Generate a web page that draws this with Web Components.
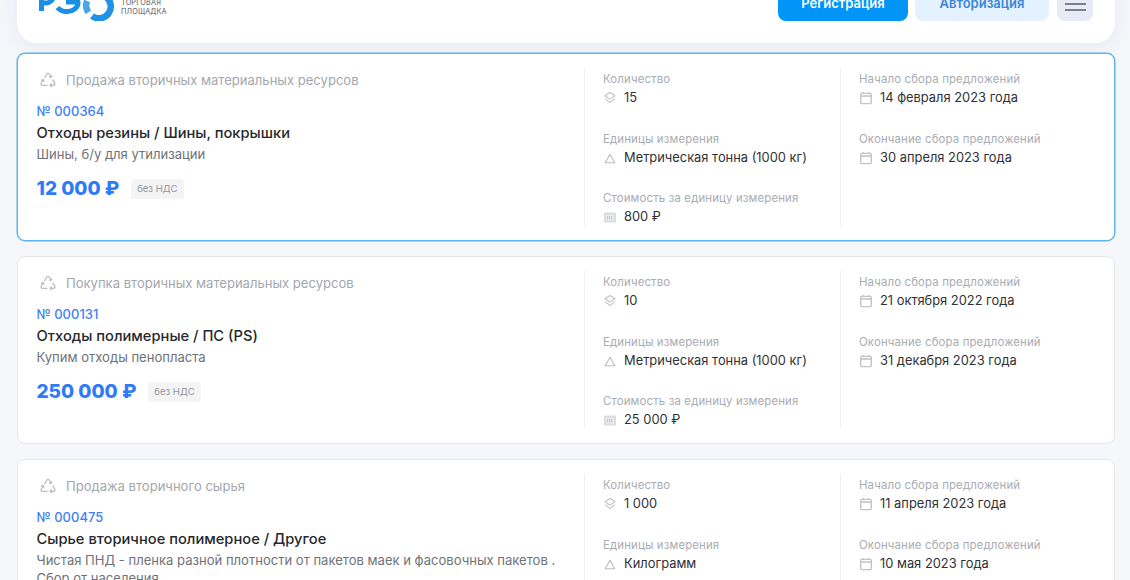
<!DOCTYPE html>
<html lang="ru">
<head>
<meta charset="utf-8">
<title>Торговая площадка</title>
<style>
  html, body { margin: 0; height: 100%; overflow: hidden; }
  body { background: #f5f7fb; font-family: Inter, "Noto Sans", sans-serif; color: #2b2d33; }
</style>
</head>
<body>
<market-page>
  <market-header></market-header>
  <lot-card active kind="Продажа вторичных материальных ресурсов" num="№ 000364"
    name="Отходы резины / Шины, покрышки" note="Шины, б/у для утилизации" price="12 000 ₽"
    qty="15" unit="Метрическая тонна (1000 кг)" cost="800 ₽" start="14 февраля 2023 года" end="30 апреля 2023 года"></lot-card>
  <lot-card kind="Покупка вторичных материальных ресурсов" num="№ 000131"
    name="Отходы полимерные / ПС (PS)" note="Купим отходы пенопласта" price="250 000 ₽"
    qty="10" unit="Метрическая тонна (1000 кг)" cost="25 000 ₽" start="21 октября 2022 года" end="31 декабря 2023 года"></lot-card>
  <lot-card kind="Продажа вторичного сырья" num="№ 000475"
    name="Сырье вторичное полимерное / Другое" note="Чистая ПНД - пленка разной плотности от пакетов маек и фасовочных пакетов . Сбор от населения" price="18 000 ₽"
    qty="1 000" unit="Килограмм" cost="18 ₽" start="11 апреля 2023 года" end="10 мая 2023 года"></lot-card>
</market-page>
<script>
class marketPage extends HTMLElement {
  constructor() {
    super();
    this.attachShadow({ mode: 'open' });
    this.shadowRoot.innerHTML = `
      <style>
        :host {
          display: flex;
          flex-direction: column;
          gap: 15px;
          padding: 0 15px 0 17px;
          margin-top: -40px;
        }
      </style>
      <slot></slot>
    `;
  }
}

class marketHeader extends HTMLElement {
  constructor() {
    super();
    this.attachShadow({ mode: 'open' });
    this.shadowRoot.innerHTML = `
      <style>
        :host {
          display: flex;
          align-items: flex-start;
          height: 83px;
          margin-bottom: -5px;
          padding: 19px 22px 0 22px;
          box-sizing: border-box;
          background: #fff;
          border-radius: 0 0 20px 20px;
          box-shadow: 0 4px 20px rgba(40, 50, 90, .07);
        }
        .logo { display: flex; align-items: flex-end; height: 42px; }
        .logo svg { display: block; }
        .sub {
          margin-left: 4px;
          margin-bottom: 4.6px;
          font-size: 7.3px;
          line-height: 9.4px;
          color: #555a66;
          letter-spacing: .15px;
        }
        .actions { margin-left: auto; display: flex; gap: 7px; margin-top: 2px; }
        .btn {
          height: 40px;
          padding-top: 14px;
          box-sizing: border-box;
          border-radius: 8px;
          font-size: 13px;
          font-weight: 600;
          text-align: center;
          line-height: 16px;
        }
        .reg { width: 130px; background: #0095f6; color: #fff; }
        .auth { width: 134px; background: #e3f2fe; color: #3b86d6; margin-right: 1px; }
        .menu {
          width: 36px;
          height: 40px;
          border-radius: 8px;
          background: #e8ebf5;
          display: flex;
          flex-direction: column;
          align-items: center;
          gap: 4.5px;
          padding-top: 22px;
          box-sizing: border-box;
        }
        .menu i { display: block; width: 21px; height: 1.5px; background: #7b8090; }
      </style>
      <div class="logo">
        <svg width="78" height="42" viewBox="39 -21 78 42" fill="none" stroke="#1a8fe3" stroke-width="5">
          <path d="M41.5 11V-12H46a7.5 7.5 0 0 1 0 15H41.5"/>
          <path d="M57.5 7.5a11 8.5 0 0 0 10 4a11 8.5 0 0 0 10.5-8.5a11 9 0 0 0-10.5-9 M66 2h12"/>
          <path d="M87.2 1A11.75 11.75 0 0 0 88.3 12.4" stroke="#4aa6ea" stroke-width="6.5"/>
          <path d="M106 -3A11.75 11.75 0 0 1 92 16" stroke="#1f93e8" stroke-width="6.5"/>
        </svg>
        <div class="sub">ТОРГОВАЯ<br>ПЛОЩАДКА</div>
      </div>
      <div class="actions">
        <div class="btn reg">Регистрация</div>
        <div class="btn auth">Авторизация</div>
        <div class="menu"><i></i><i></i></div>
      </div>
    `;
  }
}

const icons = {
  recycle: `<svg width="16" height="16" viewBox="0 0 16 16" fill="none" stroke="#bcbec3" stroke-width="1.3" stroke-linejoin="round">
    <path d="M4.5 6 6.8 2c.5-.8 1.9-.8 2.4 0L11 5"/><path d="M12 3.4l-.9 1.9-2.1-.2"/>
    <path d="M12.6 7.5l2.2 3.8c.5 1-.1 2-1.2 2h-3.1"/><path d="M11.8 11.5 10 13.3l1.8 1.7"/>
    <path d="M7.5 13.3h-5c-1.2 0-1.8-1-1.3-2l2-3.5"/><path d="M.9 8.3l2.3-.8.8 2.3"/>
  </svg>`,
  layers: `<svg width="14" height="14" viewBox="0 0 14 14" fill="none" stroke="#bdc0c5" stroke-width="1.1" stroke-linejoin="round">
    <path d="M7 1.5 12 4.8 7 8.1 2 4.8z"/><path d="M2.2 7.6 7 11.6l4.8-4"/>
  </svg>`,
  triangle: `<svg width="14" height="14" viewBox="0 0 14 14" fill="none" stroke="#b9bcc2" stroke-width="1.1" stroke-linejoin="round">
    <path d="M7 3.2 11.8 11.8H2.2z"/>
  </svg>`,
  money: `<svg width="14" height="14" viewBox="0 0 14 14" fill="#dcdde0">
    <rect x="1" y="2.5" width="12" height="10" rx=".5"/>
    <rect x="3" y="5" width="8" height="5.5" fill="#eceef0"/>
    <path d="M4.6 6v3.4M6.6 6v3.4M8.8 6v3.4" stroke="#b2b5bb" stroke-width=".8"/>
  </svg>`,
  calendar: `<svg width="14" height="14" viewBox="0 0 14 14" fill="none" stroke="#c2c4c9" stroke-width="1.4">
    <rect x="1.7" y="2.4" width="10.6" height="10.2" rx="1"/><path d="M1.7 5h10.6" stroke-width="1.6"/>
    <path d="M4 .9v2M10 .9v2"/>
  </svg>`
};

class lotField extends HTMLElement {
  constructor() {
    super();
    this.attachShadow({ mode: 'open' });
  }
  connectedCallback() {
    this.shadowRoot.innerHTML = `
      <style>
        :host { display: block; height: 59.5px; }
        .label { font-size: 11.4px; line-height: 14px; color: #a9acb2; letter-spacing: .15px; white-space: nowrap; }
        .value {
          display: flex;
          align-items: center;
          gap: 7px;
          margin-top: 2px;
          font-size: 12.88px;
          line-height: 20px;
          color: #2f3136;
          white-space: nowrap;
        }
        svg { display: block; flex: none; }
      </style>
      <div class="label">${this.getAttribute('label')}</div>
      <div class="value">${icons[this.getAttribute('icon')]}<span><slot></slot></span></div>
    `;
  }
}

class lotCard extends HTMLElement {
  constructor() {
    super();
    this.attachShadow({ mode: 'open' });
  }
  connectedCallback() {
    const a = name => this.getAttribute(name);
    this.shadowRoot.innerHTML = `
      <style>
        :host {
          display: grid;
          grid-template-columns: 566px 256px 1fr;
          height: 188px;
          box-sizing: border-box;
          padding: 14px 0;
          background: #fff;
          border: 1px solid #e4e6ea;
          border-radius: 8px;
        }
        :host([active]) {
          border-color: #5db4ef;
          box-shadow: 0 0 0 .5px #5db4ef;
        }
        .main { padding: .5px 18.5px 0; min-width: 0; overflow: hidden; }
        .kind {
          display: flex;
          align-items: center;
          gap: 10px;
          padding-left: 3.5px;
          height: 22px;
          font-size: 13.05px;
          color: #a4a7ad;
        }
        .kind svg { display: block; flex: none; }
        .num { margin-top: 10.5px; font-size: 13px; line-height: 20px; font-weight: 500; color: #3f80f6; }
        .name { margin-top: 1px; font-size: 14.7px; line-height: 22px; font-weight: 500; color: #26282c; }
        .note { margin-top: 1px; font-size: 13.05px; line-height: 18px; color: #6f7278; }
        .price-row { display: flex; align-items: center; gap: 11.5px; margin-top: 13px; }
        .price { font-size: 19px; line-height: 26px; font-weight: 800; color: #2f7bf5; }
        .tag {
          height: 20px;
          padding: 0 6.5px;
          border-radius: 4px;
          background: #f4f4f5;
          color: #94979d;
          font-size: 9.5px;
          line-height: 20px;
        }
        .col { border-left: 1px solid #eff0f2; padding: 4.4px 0 0 18px; min-width: 0; overflow: hidden; }
      </style>
      <div class="main">
        <div class="kind">${icons.recycle}<span>${a('kind')}</span></div>
        <div class="num">${a('num')}</div>
        <div class="name">${a('name')}</div>
        <div class="note">${a('note')}</div>
        <div class="price-row"><div class="price">${a('price')}</div><div class="tag">без НДС</div></div>
      </div>
      <div class="col">
        <lot-field label="Количество" icon="layers">${a('qty')}</lot-field>
        <lot-field label="Единицы измерения" icon="triangle">${a('unit')}</lot-field>
        <lot-field label="Стоимость за единицу измерения" icon="money">${a('cost')}</lot-field>
      </div>
      <div class="col">
        <lot-field label="Начало сбора предложений" icon="calendar">${a('start')}</lot-field>
        <lot-field label="Окончание сбора предложений" icon="calendar">${a('end')}</lot-field>
      </div>
    `;
  }
}

customElements.define('market-page', marketPage);
customElements.define('market-header', marketHeader);
customElements.define('lot-field', lotField);
customElements.define('lot-card', lotCard);
</script>
</body>
</html>
